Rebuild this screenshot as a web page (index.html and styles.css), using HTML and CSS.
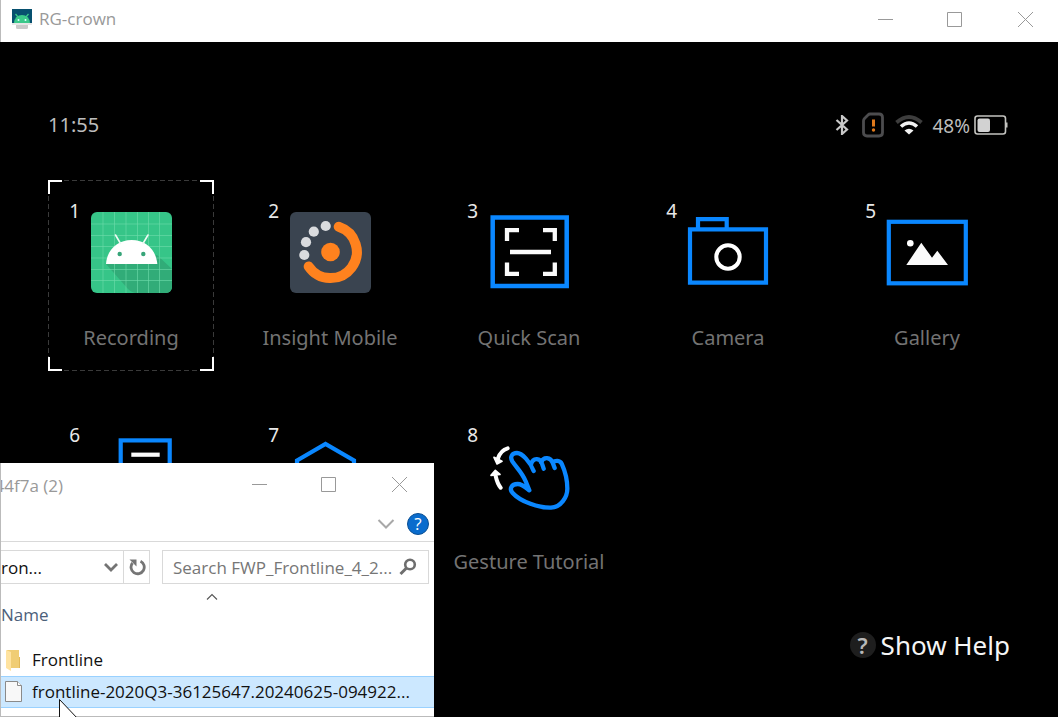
FILE: index.html
```html
<!DOCTYPE html>
<html lang="en">
<head>
<meta charset="utf-8">
<title>RG-crown</title>
<link rel="stylesheet" href="styles.css">
</head>
<body>
<div class="desktop">
  <header class="titlebar">
    <svg class="app-icon" viewBox="0 0 20 20" aria-hidden="true">
      <rect width="20" height="15" fill="#07506f"/>
      <rect y="14" width="20" height="2" fill="#e6e6e6"/>
      <path d="M4 16h12v2.500q0 1.500-1.500 1.500h-9Q4 20 4 18.500z" fill="#cacaca"/>
      <path d="M2 14a8 8 0 0 1 16 0z" fill="#3bc98a"/>
      <path d="M3.500 5l2.500 3M16.500 5L14 8" stroke="#3bc98a" stroke-width="1.300"/>
      <circle cx="6.500" cy="11" r="1" fill="#dff"/><circle cx="13.500" cy="11" r="1" fill="#dff"/>
    </svg>
    <h1 class="window-title">RG-crown</h1>
    <div class="window-buttons">
      <button type="button" aria-label="Minimize"><svg viewBox="0 0 16 16"><path d="M1 8.500h15"/></svg></button>
      <button type="button" aria-label="Maximize"><svg viewBox="0 0 16 16"><path d="M.5 1.500h14v14H.5z"/></svg></button>
      <button type="button" aria-label="Close"><svg viewBox="0 0 16 16"><path d="M1 1l15 15M16 1L1 16"/></svg></button>
    </div>
  </header>

  <main class="screen">
    <div class="status">
      <time class="clock">11:55</time>
      <div class="indicators">
        <svg class="bluetooth" viewBox="0 0 14 20" aria-label="Bluetooth"><path d="M1.500 5l10.500 9.500L7 19V1l5 4.500L1.500 15" fill="none" stroke="#c8c8c8" stroke-width="2.200"/></svg>
        <svg class="sim" viewBox="0 0 22 26" aria-label="SIM error"><path d="M8 2h9q3.500 0 3.500 3.500v15q0 3.500-3.500 3.500H5q-3.500 0-3.500-3.500V9q0-1.500 1-2.500L6 3q1-1 2-1z" fill="none" stroke="#4c4c4e" stroke-width="2.800"/><path d="M11.500 7.500v7" stroke="#e07a1c" stroke-width="3"/><circle cx="11.500" cy="18" r="1.700" fill="#e07a1c"/></svg>
        <svg class="wifi" viewBox="0 0 28 20" aria-label="Wi-Fi"><path d="M1.500 7.500Q14-3.500 26.500 7.500" fill="none" stroke="#3d3d3d" stroke-width="3.800"/><path d="M6 11.500q8-7 16 0" fill="none" stroke="#f2f2f2" stroke-width="3.600"/><path d="M9.500 15.500q4.500-3.500 9 0L14 19.500z" fill="#f2f2f2"/></svg>
        <span class="charge">48%</span>
        <svg class="battery" viewBox="0 0 34 20" aria-label="Battery"><rect x="1" y="1" width="30.500" height="18" rx="2.500" fill="none" stroke="#c4c4c0" stroke-width="1.600"/><rect x="3.500" y="3.500" width="12.500" height="13.500" rx="2" fill="#d2d2d2"/><path d="M32 7.500h1.500v5H32z" fill="#c4c4c0"/></svg>
      </div>
    </div>

    <nav class="apps" aria-label="Apps">
      <button type="button" class="app app-focused">
        <span class="num">1</span>
        <svg class="glyph" viewBox="0 0 82 82" aria-hidden="true">
          <clipPath id="card"><rect x="1" width="81" height="81" rx="6"/></clipPath>
          <g clip-path="url(#card)">
            <rect x="1" width="81" height="81" fill="#36c588"/>
            <path d="M16 52l22 25q4 4 9 4h35V57L67 43z" fill="#31ac78"/>
            <path d="M13 0v81M24.500 0v81M36 0v81M47.500 0v81M58.500 0v81M69.500 0v81M1 12h81M1 23.500h81M1 34.500h81M1 46h81M1 57.500h81M1 68.500h81" stroke="#70dcab" stroke-opacity=".6" stroke-width="1"/>
          </g>
          <path d="M16 52C17 38 27 28 41.700 28S66 38 67.300 52z" fill="#fff"/>
          <path d="M25.500 23l5 8.500M58 23l-5 8.500" stroke="#eefaf4" stroke-width="1.600" stroke-linecap="round"/>
          <circle cx="29.700" cy="42" r="2.200" fill="#37a579"/><circle cx="53.300" cy="42" r="2.200" fill="#37a579"/>
        </svg>
        <span class="name">Recording</span>
      </button>
      <button type="button" class="app">
        <span class="num">2</span>
        <svg class="glyph" viewBox="0 0 82 82" aria-hidden="true">
          <rect x="1" width="81" height="81" rx="6" fill="#3a4450"/>
          <circle cx="41.500" cy="40" r="9.300" fill="#ff821e"/>
          <path d="M49.700 14.800A26.300 26.300 0 1 1 19.700 54.500" fill="none" stroke="#ff821e" stroke-width="10" stroke-linecap="round"/>
          <g fill="#d9dbde"><circle cx="36.700" cy="14" r="5.100"/><circle cx="24.800" cy="19.700" r="5.100"/><circle cx="17" cy="30.200" r="5.100"/><circle cx="15.300" cy="43" r="5.100"/></g>
        </svg>
        <span class="name">Insight Mobile</span>
      </button>
      <button type="button" class="app">
        <span class="num">3</span>
        <svg class="glyph" viewBox="0 0 82 82" fill="none" aria-hidden="true">
          <rect x="4.700" y="5.500" width="74" height="68.500" stroke="#0a87ff" stroke-width="4.500"/>
          <path d="M31 18.200H19V29M55 18.200h11.800V29M31 61.800H19V50.500M55 61.800h11.800V50.500M22 40h41" stroke="#fafafa" stroke-width="4.300"/>
        </svg>
        <span class="name">Quick Scan</span>
      </button>
      <button type="button" class="app">
        <span class="num">4</span>
        <svg class="glyph" viewBox="0 0 82 82" fill="none" aria-hidden="true">
          <path d="M3 17.300h76v53.400H3zM11 17.300V7.200h28.700v10.100" stroke="#0a87ff" stroke-width="4.200"/>
          <circle cx="41" cy="45" r="11.700" stroke="#fff" stroke-width="4"/>
        </svg>
        <span class="name">Camera</span>
      </button>
      <button type="button" class="app">
        <span class="num">5</span>
        <svg class="glyph" viewBox="0 0 82 82" fill="none" aria-hidden="true">
          <rect x="2.800" y="9.800" width="77" height="61.500" stroke="#0a87ff" stroke-width="4.200"/>
          <circle cx="24.300" cy="31.300" r="3.300" fill="#fff"/>
          <path d="M20.300 53l15-22.300 10.700 15 5.300-7L62 53z" fill="#fafafa"/>
        </svg>
        <span class="name">Gallery</span>
      </button>
      <button type="button" class="app" aria-label="App 6">
        <span class="num">6</span>
        <svg class="glyph" viewBox="0 0 82 82" fill="none" aria-hidden="true">
          <rect x="30.700" y="4.400" width="49" height="72" stroke="#0a87ff" stroke-width="4.200"/>
          <path d="M41.300 18.700h28.400" stroke="#fafafa" stroke-width="4.200"/>
        </svg>
      </button>
      <button type="button" class="app" aria-label="App 7">
        <span class="num">7</span>
        <svg class="glyph" viewBox="0 0 82 82" fill="none" aria-hidden="true">
          <path d="M8 24.500L36.500 8 65 24.500v33L36.500 74 8 57.500z" stroke="#0a87ff" stroke-width="4.200"/>
        </svg>
      </button>
      <button type="button" class="app">
        <span class="num">8</span>
        <svg class="glyph" viewBox="144 48 246 246" fill="none" aria-hidden="true">
          <path d="M281 153C271 126 246 99 231 99C216 99 209 111 217 124C231 145 247 158 257 184Q263 199 268 211C257 202 247 192 233 192C214 192 207 207 218 219C242 246 298 264 333 263C363 261 382 231 382 206C382 178 375 153 365 131C360 121 346 120 338 128M273 133C280 109 302 116 306 131L311 146M303 127C311 108 332 112 338 128L344 144" stroke="#0a87ff" stroke-width="13" stroke-linecap="round" stroke-linejoin="round"/>
          <path d="M203 85Q182 91 174 115M182 203Q172 191 167 168" stroke="#fff" stroke-width="12" stroke-linecap="round"/>
          <path d="M162 112l24 12-15 8zM153 166l13-15 14 12z" fill="#fff" stroke="#fff" stroke-width="5" stroke-linejoin="round"/>
        </svg>
        <span class="name">Gesture Tutorial</span>
      </button>
    </nav>

    <button type="button" class="help"><span class="help-mark">?</span>Show Help</button>
  </main>

  <section class="explorer" aria-label="File explorer">
    <header class="explorer-bar">
      <h2 class="explorer-title">44f7a (2)</h2>
      <div class="window-buttons">
        <button type="button" aria-label="Minimize"><svg viewBox="0 0 16 16"><path d="M1 8.500h15"/></svg></button>
        <button type="button" aria-label="Maximize"><svg viewBox="0 0 16 16"><path d="M.5 1.500h14v14H.5z"/></svg></button>
        <button type="button" aria-label="Close"><svg viewBox="0 0 16 16"><path d="M1 1l15 15M16 1L1 16"/></svg></button>
      </div>
    </header>
    <div class="ribbon">
      <button type="button" class="plain" aria-label="Expand ribbon"><svg width="18" height="12" viewBox="0 0 18 12"><path d="M1.500 2L9 9.500 16.500 2" fill="none" stroke="#a8a8a8" stroke-width="2"/></svg></button>
      <button type="button" class="about" aria-label="Help">?</button>
    </div>
    <div class="tools">
      <div class="address">
        <span class="path">ron...</span>
        <button type="button" class="plain" aria-label="Previous locations"><svg width="14" height="12" viewBox="0 0 14 12"><path d="M1 3l6 6 6-6" fill="none" stroke="#747474" stroke-width="2.800"/></svg></button>
        <button type="button" class="plain refresh" aria-label="Refresh"><svg width="18" height="18" viewBox="0 0 18 18"><path d="M12.500 3.200A6.600 6.600 0 1 1 4.500 5" fill="none" stroke="#757575" stroke-width="2.800"/><path d="M1.500 1.500h7v7z" fill="#757575"/></svg></button>
      </div>
      <label class="search">
        <input type="text" placeholder="Search FWP_Frontline_4_2..." aria-label="Search">
        <svg width="18" height="18" viewBox="0 0 18 18" fill="none" stroke="#6e6e6e" aria-hidden="true"><circle cx="11" cy="6.500" r="4.800" stroke-width="2.600"/><path d="M7.500 10L1.500 16" stroke-width="3"/></svg>
      </label>
    </div>
    <table class="files">
      <thead>
        <tr><th scope="col"><svg class="sort" width="12" height="8" viewBox="0 0 12 8" aria-label="Sorted ascending"><path d="M1 6.500l5-5 5 5" fill="none" stroke="#555" stroke-width="1.100"/></svg><span>Name</span></th></tr>
      </thead>
      <tbody>
        <tr><td><div class="file"><svg width="18" height="24" viewBox="0 0 18 24" aria-hidden="true"><path d="M2 2h12v18H2z" fill="#f0cd74"/><path d="M1 2l5 2v19l-5-3z" fill="#ffe3a0"/><path d="M14 9h1v11h-1z" fill="#e2b95a"/></svg>Frontline</div></td></tr>
        <tr class="selected"><td><div class="file"><svg width="18" height="24" viewBox="0 0 18 24" aria-hidden="true"><path d="M.5 1.500h12l4 4v16H.5z" fill="#f8f8f8" stroke="#8a8a8a"/><path d="M12.500 1.500v4h4" fill="#fff" stroke="#8a8a8a"/></svg>frontline-2020Q3-36125647.20240625-094922...</div></td></tr>
      </tbody>
    </table>
  </section>

  <svg class="cursor" viewBox="0 0 20 18" aria-hidden="true"><path d="M.5.5v26l6-6h13z" fill="#fff" stroke="#111"/></svg>
</div>
</body>
</html>
```
FILE: styles.css
```css
* { box-sizing: border-box; }

body {
  margin: 0;
  background: #000;
  font-family: "Noto Sans", "Open Sans", sans-serif;
}

button {
  margin: 0;
  padding: 0;
  border: 0;
  background: none;
  color: inherit;
  font: inherit;
}

svg { display: block; flex: none; }

.desktop {
  position: relative;
  display: flex;
  flex-direction: column;
  min-height: 100vh;
  overflow: hidden;
}

/* Window frames */
.titlebar {
  display: flex;
  align-items: center;
  height: 42px;
  padding: 0 0 4px 11px;
  border-left: 1px solid #bbb;
  background: #fff;
}

.app-icon { width: 20px; height: 20px; margin-right: 7px; }

.window-title {
  flex: 1;
  margin: 0;
  color: #999;
  font: 400 17px/24px "Open Sans", sans-serif;
}

.window-buttons { display: flex; }

.window-buttons button {
  display: grid;
  place-items: center;
  width: 70px;
  height: 36px;
}

.titlebar .window-buttons { margin-right: -2px; }

.window-buttons svg {
  width: 16px;
  height: 16px;
  fill: none;
  stroke: #999;
}

/* Headset screen */
.screen {
  display: flex;
  flex: 1;
  flex-direction: column;
  padding: 69px 48px 55px;
}

.status {
  display: flex;
  align-items: center;
  justify-content: space-between;
  height: 28px;
  margin-bottom: 41px;
  color: #bdbdbd;
  font-size: 20px;
}

.clock { padding-bottom: 2px; }

.indicators { display: flex; align-items: center; padding-right: 2px; }

.bluetooth { width: 14px; height: 20px; margin-right: 13px; }
.sim { width: 22px; height: 26px; margin-right: 11px; }
.wifi { width: 28px; height: 20px; margin-right: 9px; }
.charge { padding-top: 2px; margin-right: 4px; font-size: 19px; }
.battery { width: 34px; height: 20px; }

.apps {
  display: grid;
  grid-template-columns: repeat(5, 1fr);
  grid-auto-rows: 191px;
  gap: 33px;
}

.app {
  display: grid;
  grid-template-columns: 1fr 82px 1fr;
  grid-template-rows: 82px 1fr;
  padding-top: 32px;
  color: #737373;
}

/* White corners over a faint dashed frame */
.app-focused {
  background:
    linear-gradient(#fff, #fff) 0 0 / 14px 2px no-repeat,
    linear-gradient(#fff, #fff) 0 0 / 2px 14px no-repeat,
    linear-gradient(#fff, #fff) 100% 0 / 14px 2px no-repeat,
    linear-gradient(#fff, #fff) 100% 0 / 2px 14px no-repeat,
    linear-gradient(#fff, #fff) 0 100% / 14px 2px no-repeat,
    linear-gradient(#fff, #fff) 0 100% / 2px 14px no-repeat,
    linear-gradient(#fff, #fff) 100% 100% / 14px 2px no-repeat,
    linear-gradient(#fff, #fff) 100% 100% / 2px 14px no-repeat,
    linear-gradient(90deg, #3a3a3a 5px, transparent 5px) 0 0 / 8px 1px repeat-x,
    linear-gradient(90deg, #3a3a3a 5px, transparent 5px) 0 100% / 8px 1px repeat-x,
    linear-gradient(#3a3a3a 5px, transparent 5px) 0 0 / 1px 8px repeat-y,
    linear-gradient(#3a3a3a 5px, transparent 5px) 100% 0 / 1px 8px repeat-y;
}

.num {
  justify-self: end;
  margin: -14px 10px 0 0;
  color: #e8e8e8;
  font-size: 19px;
  line-height: 26px;
}

.glyph { width: 82px; height: 82px; }

.name {
  grid-column: 1 / -1;
  margin-top: 30px;
  font-size: 20px;
  line-height: 28px;
  white-space: nowrap;
}

.help {
  display: flex;
  align-items: center;
  gap: 5px;
  align-self: flex-end;
  margin-top: auto;
  color: #f5f5f5;
  font-size: 26px;
  line-height: 34px;
}

.help-mark {
  width: 26px;
  height: 26px;
  border-radius: 50%;
  background: #1e1e1e;
  color: #b8b8b8;
  font-size: 22px;
  font-weight: 600;
  line-height: 26px;
  text-align: center;
}

/* File explorer window */
.explorer {
  position: absolute;
  bottom: 0;
  left: 0;
  width: 434px;
  border-bottom: 1px solid #bbb;
  border-left: 1px solid #bbb;
  background: #fff;
  color: #111;
  font: 17px/24px "Open Sans", sans-serif;
}

.explorer-bar { display: flex; justify-content: space-between; height: 42px; align-items: center; }

.explorer-title {
  display: flex;
  justify-content: flex-end;
  width: 62px;
  margin: 0;
  padding-top: 3px;
  overflow: hidden;
  color: #999;
  font: 400 17px/24px "Open Sans", sans-serif;
  white-space: nowrap;
}

.ribbon {
  display: flex;
  align-items: center;
  justify-content: flex-end;
  gap: 12px;
  height: 37px;
  padding: 2px 5px 0 0;
  border-bottom: 1px solid #d9d9d9;
}

.plain { display: grid; place-items: center; }

.about {
  width: 22px;
  height: 22px;
  border: 1px solid #0a4f93;
  border-radius: 50%;
  background: #0a6ccd;
  color: #fff;
  font-size: 17px;
  line-height: 20px;
}

.tools { display: flex; gap: 12px; padding: 8px 5px 0 0; }

.address {
  display: flex;
  width: 149px;
  height: 34px;
  border: 1px solid #d9d9d9;
  border-left: 0;
}

.path { flex: 1; line-height: 34px; }
.address .plain { width: 24px; }
.address .refresh { width: 26px; border-left: 1px solid #d9d9d9; }

.search {
  display: flex;
  flex: 1;
  align-items: center;
  padding: 0 11px 0 10px;
  border: 1px solid #d9d9d9;
}

.search input {
  flex: 1;
  min-width: 0;
  padding: 2px 0 0;
  border: 0;
  outline: 0;
  background: none;
  font: inherit;
}

.search input::placeholder { color: #767676; opacity: 1; }

.files { width: 100%; border-collapse: collapse; }

.files th {
  height: 60px;
  padding: 9px 11px 0 0;
  color: #4c607a;
  font-weight: 400;
  text-align: left;
  vertical-align: top;
}

.files th span { display: block; margin-top: 2px; }
.sort { margin: 0 auto; }

.files td { height: 32px; padding: 0 0 0 4px; }

.file {
  display: flex;
  align-items: center;
  gap: 9px;
  white-space: nowrap;
}

.selected { background: #cce8ff; box-shadow: inset 0 1px #99d1ff, inset 0 -1px #99d1ff; }

.explorer::after { display: block; height: 8px; content: ""; }

.cursor {
  position: absolute;
  bottom: 0;
  left: 59px;
  width: 20px;
  height: 18px;
}
```
